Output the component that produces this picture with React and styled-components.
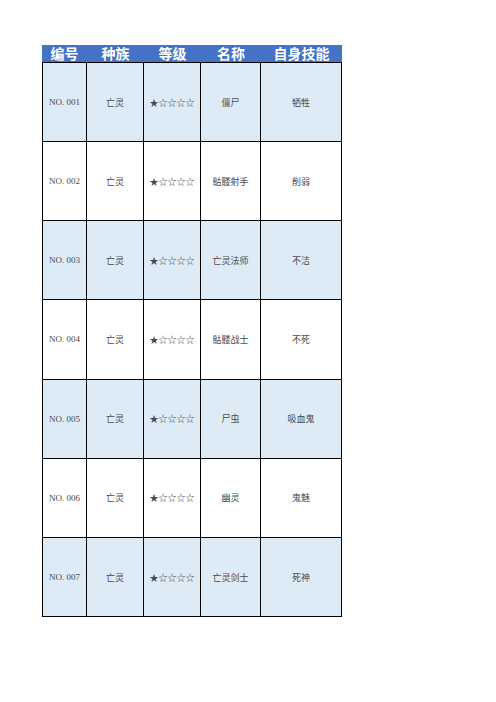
import React from 'react';
import styled, { createGlobalStyle } from 'styled-components';

const GlobalStyle = createGlobalStyle`
  html, body {
    margin: 0;
    padding: 0;
    background: #fff;
  }
`;

const columns = ['编号', '种族', '等级', '名称', '自身技能'];

const rows = [
  { id: 'NO. 001', race: '亡灵', level: '★☆☆☆☆', name: '僵尸', skill: '牺牲' },
  { id: 'NO. 002', race: '亡灵', level: '★☆☆☆☆', name: '骷髅射手', skill: '削弱' },
  { id: 'NO. 003', race: '亡灵', level: '★☆☆☆☆', name: '亡灵法师', skill: '不洁' },
  { id: 'NO. 004', race: '亡灵', level: '★☆☆☆☆', name: '骷髅战士', skill: '不死' },
  { id: 'NO. 005', race: '亡灵', level: '★☆☆☆☆', name: '尸虫', skill: '吸血鬼' },
  { id: 'NO. 006', race: '亡灵', level: '★☆☆☆☆', name: '幽灵', skill: '鬼魅' },
  { id: 'NO. 007', race: '亡灵', level: '★☆☆☆☆', name: '亡灵剑士', skill: '死神' },
];

const Page = styled.div`
  padding: 45px 0 0 42px;
`;

const Sheet = styled.div`
  display: grid;
  grid-template-columns: 45px 57px 57px 60px 81px;
  width: 300px;
`;

const HeadCell = styled.div`
  height: 17px;
  background: #4472c4;
  color: #fff;
  font-family: 'Noto Sans CJK SC', sans-serif;
  font-weight: 700;
  font-size: 14px;
  line-height: 17px;
  text-align: center;
  white-space: nowrap;
`;

const Cell = styled.div`
  box-sizing: border-box;
  height: ${p => (p.$first ? '80px' : '79.2px')};
  display: flex;
  align-items: center;
  justify-content: center;
  background: ${p => (p.$shaded ? '#ddebf7' : '#fff')};
  border-right: 1px solid #000;
  border-bottom: 1px solid #000;
  border-top: ${p => (p.$first ? '1px solid #000' : 'none')};
  border-left: ${p => (p.$lead ? '1px solid #000' : 'none')};
  color: #4a4a4a;
  font-family: 'Liberation Serif', 'Noto Sans CJK SC', serif;
  font-size: 9px;
  white-space: nowrap;
`;

export default function App() {
  return (
    <>
      <GlobalStyle />
      <Page>
        <Sheet>
          {columns.map(c => (
            <HeadCell key={c}>{c}</HeadCell>
          ))}
          {rows.map((r, idx) => {
            const shaded = idx % 2 === 0;
            const first = idx === 0;
            return [r.id, r.race, r.level, r.name, r.skill].map((v, ci) => (
              <Cell
                key={`${idx}-${ci}`}
                $shaded={shaded}
                $first={first}
                $lead={ci === 0}
              >
                {v}
              </Cell>
            ));
          })}
        </Sheet>
      </Page>
    </>
  );
}
